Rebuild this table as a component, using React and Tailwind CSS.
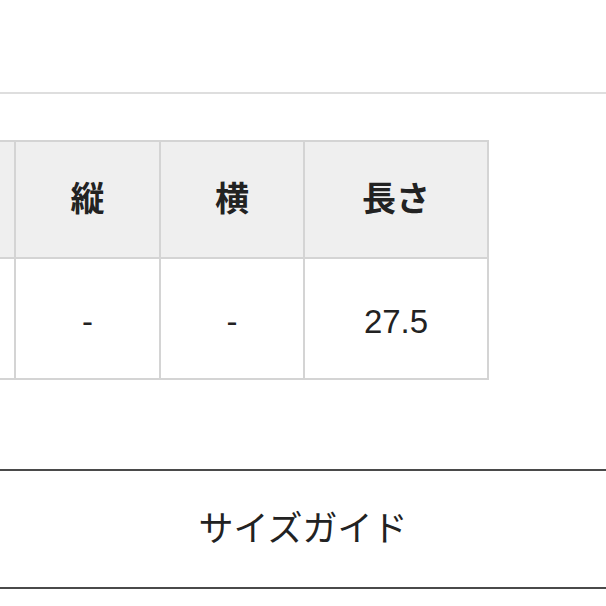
import React from 'react';

const font = "font-['Liberation_Sans','Noto_Sans_CJK_JP',sans-serif]";

const headers = ['', '縦', '横', '長さ'];
const values = ['', '-', '-', '27.5'];

const App = () => {
  return (
    <div className={`h-[606px] w-full overflow-hidden bg-white text-[#222] ${font}`}>
      {/* 上の区切り線 */}
      <div className="mt-[92px] border-t-2 border-[#dedede]" />

      {/* サイズ表 */}
      <div className="mt-[46px] grid w-[489px] grid-cols-[16px_145px_144px_184px] border-t-2 border-[#d4d4d4]">
        {headers.map((h, i) => (
          <div
            key={`h-${i}`}
            className="flex h-[117px] items-center justify-center border-r-2 border-b-2 border-[#d4d4d4] bg-[#efefef] text-[34px] font-bold"
          >
            {h}
          </div>
        ))}
        {values.map((v, i) => (
          <div
            key={`v-${i}`}
            className="flex h-[121px] items-center justify-center border-r-2 border-b-2 border-[#d4d4d4] pt-[6px] text-[33px]"
          >
            {v}
          </div>
        ))}
      </div>

      {/* サイズガイド ボタン */}
      <button className="mt-[89px] flex h-[120px] w-full items-center justify-center border-y-2 border-[#4a4a4a] bg-white text-[35px] text-[#222]">
        サイズガイド
      </button>
    </div>
  );
};

export default App;
